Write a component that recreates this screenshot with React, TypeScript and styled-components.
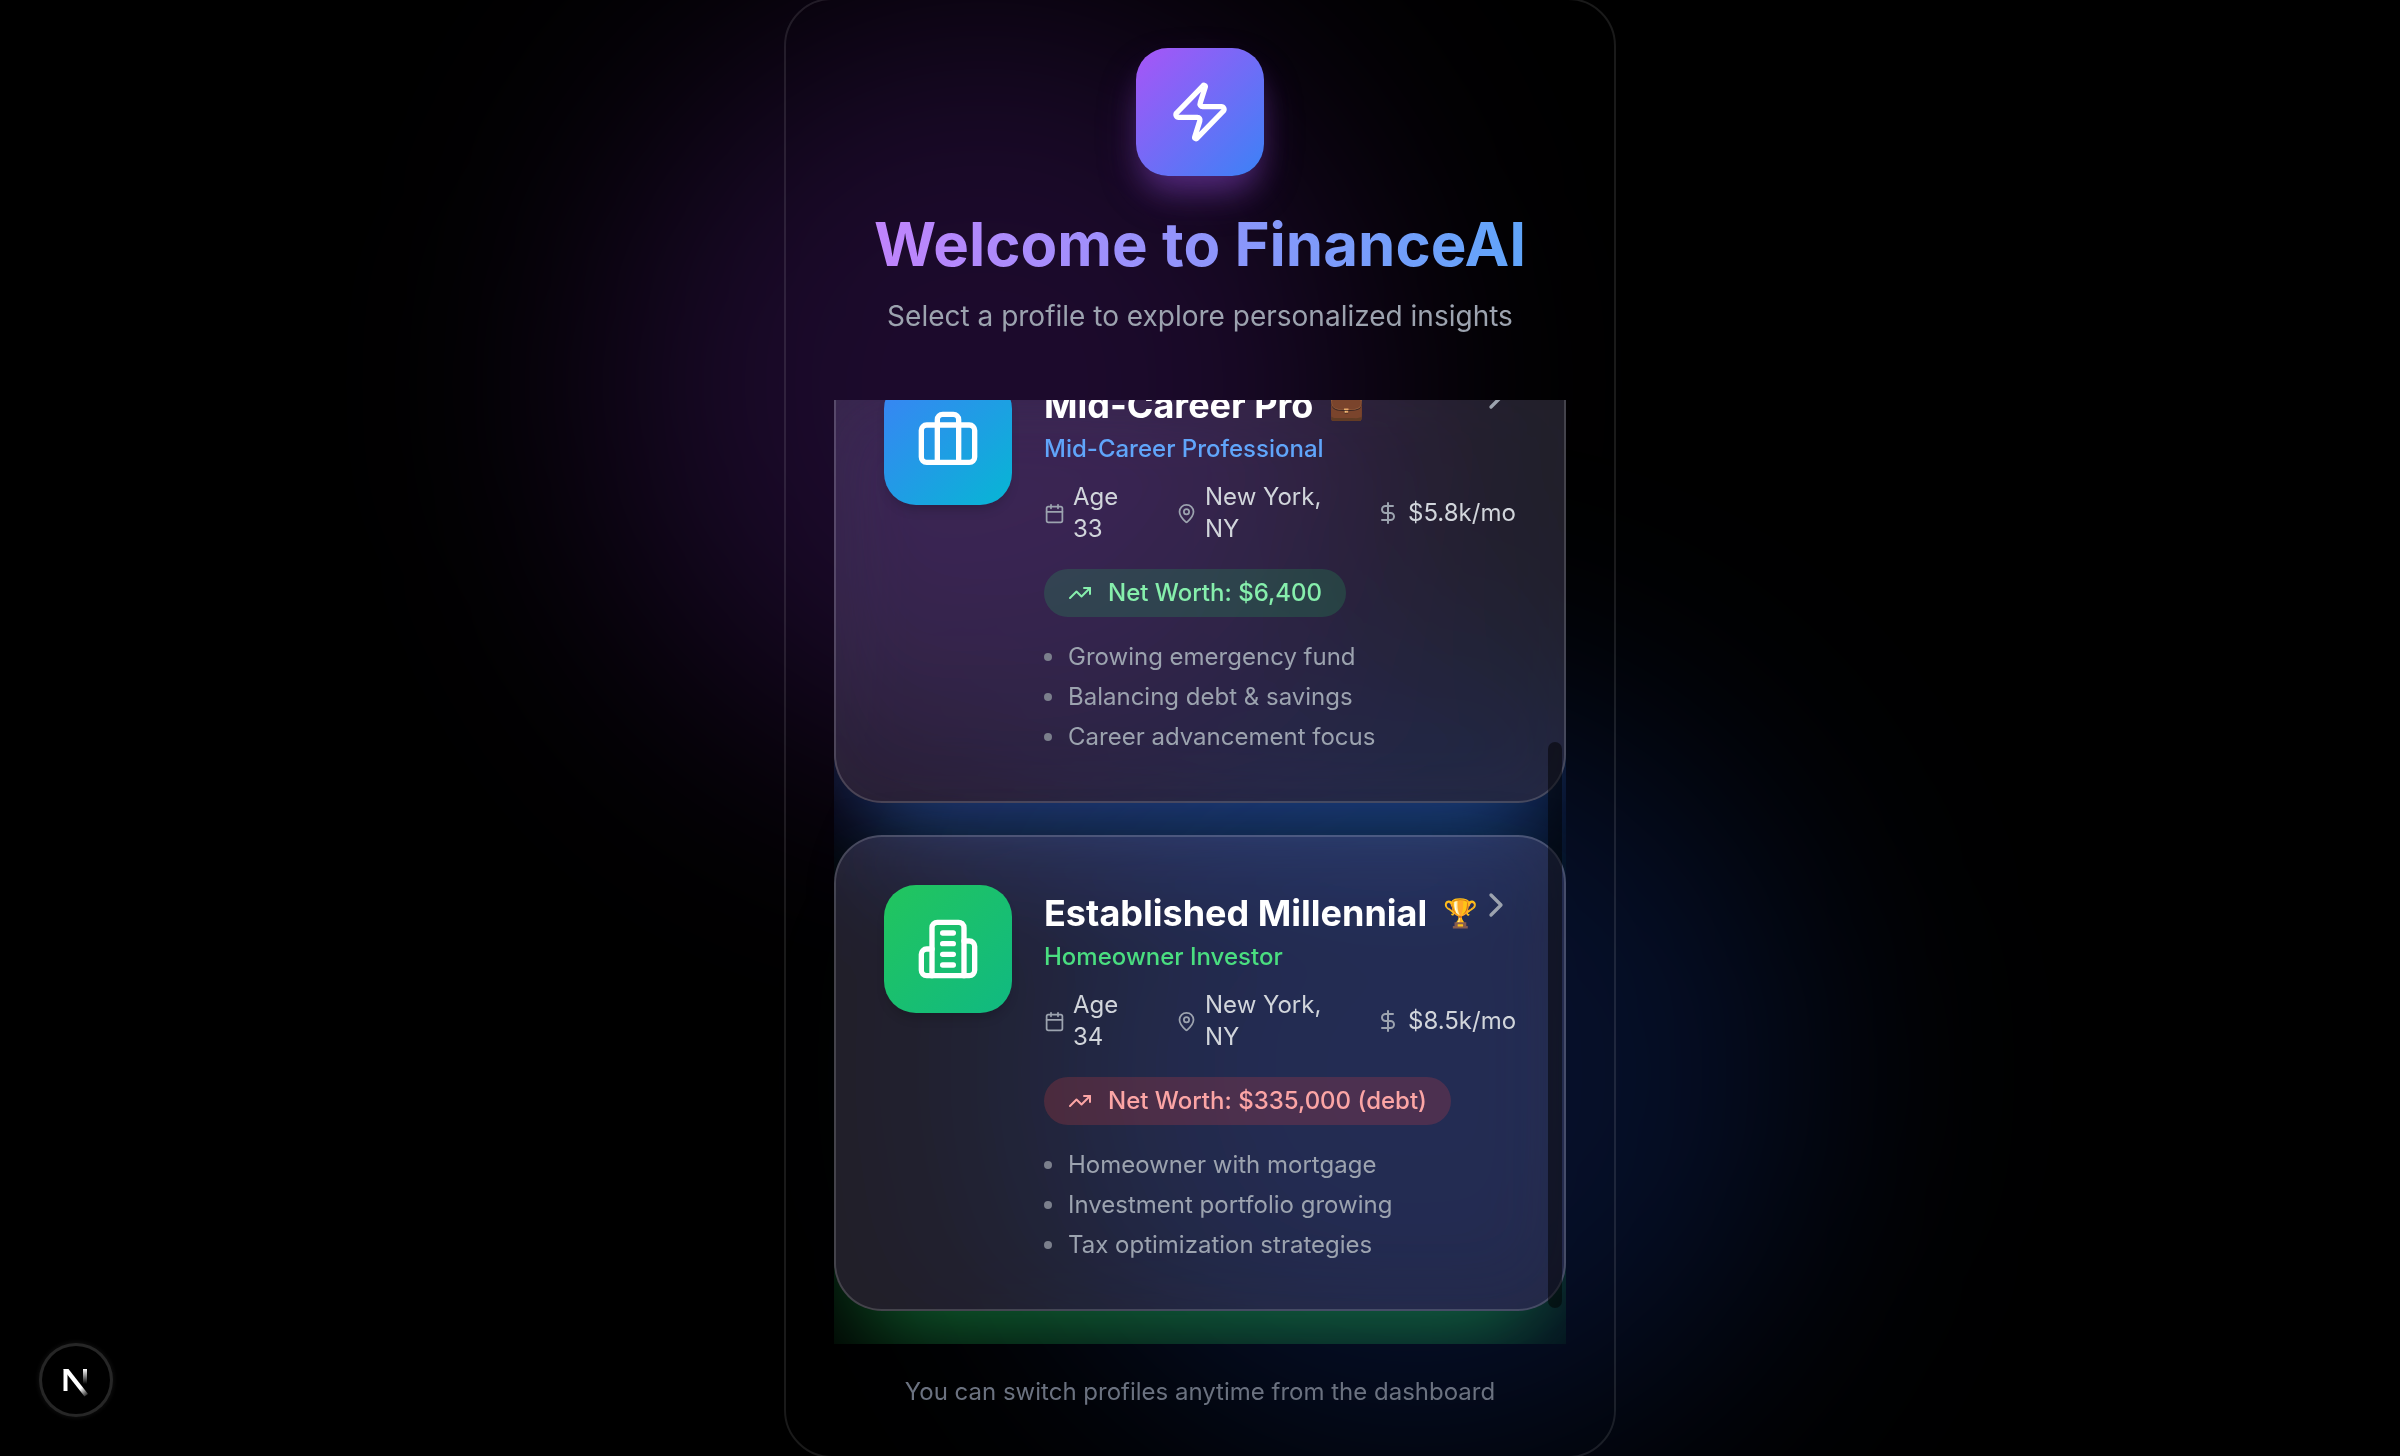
import React from "react";
import styled, { createGlobalStyle } from "styled-components";
import {
  Briefcase,
  Calendar,
  ChevronRight,
  DollarSign,
  MapPin,
  TrendingUp,
  Zap,
} from "lucide-react";

const GlobalStyle = createGlobalStyle`
  *, *::before, *::after { box-sizing: border-box; }
  html, body { margin: 0; background: #000; }
  body {
    font-family: Inter, "Noto Sans", sans-serif;
    color: #fff;
    -webkit-font-smoothing: antialiased;
  }
`;

const Page = styled.main`
  position: relative;
  height: 100vh;
  display: flex;
  align-items: center;
  justify-content: center;
  overflow: hidden;
  background: #000;
`;

const Glow = styled.div<{ $tone: "purple" | "blue" }>`
  position: absolute;
  width: 768px;
  height: 768px;
  border-radius: 50%;
  filter: blur(128px);
  ${({ $tone }) =>
    $tone === "purple"
      ? "top: 0; left: 25%; background: rgba(147, 51, 234, 0.19);"
      : "bottom: 0; right: 25%; background: rgba(29, 78, 216, 0.2);"}
`;

const Panel = styled.section`
  position: relative;
  flex: none;
  display: flex;
  flex-direction: column;
  width: 100%;
  max-width: 832px;
  height: calc(100vh + 4px);
  padding: 48px;
  border: 2px solid rgba(255, 255, 255, 0.1);
  border-radius: 48px;
`;

const Header = styled.header`
  display: flex;
  flex-direction: column;
  align-items: center;
  margin-bottom: 64px;
`;

const Logo = styled.div`
  display: grid;
  place-items: center;
  width: 128px;
  height: 128px;
  margin-bottom: 32px;
  border-radius: 32px;
  background: linear-gradient(to bottom right, #a855f7, #3b82f6);
  box-shadow: 0 20px 30px -6px rgba(168, 85, 247, 0.3), 0 20px 50px -10px rgba(168, 85, 247, 0.25);
`;

const Title = styled.h1`
  margin: 0 0 16px;
  font-size: 60px;
  line-height: 72px;
  font-weight: 700;
  color: transparent;
  background: linear-gradient(to right, #c084fc, #60a5fa);
  background-clip: text;
  -webkit-background-clip: text;
`;

const Subtitle = styled.p`
  margin: 0;
  font-size: 28px;
  line-height: 40px;
  color: #9ca3af;
`;

const ListFrame = styled.div`
  position: relative;
  flex: 1;
  min-height: 0;
  display: flex;
`;

const ProfileList = styled.div`
  flex: 1;
  display: flex;
  flex-direction: column;
  justify-content: flex-end;
  gap: 32px;
  padding-bottom: 33px;
  overflow: hidden;
`;

const ScrollThumb = styled.div`
  position: absolute;
  right: 4px;
  bottom: 36px;
  width: 14px;
  height: 60%;
  border-radius: 7px;
  background: rgba(0, 0, 0, 0.5);
`;

const Card = styled.button<{ $shadow: string }>`
  position: relative;
  flex: none;
  display: flex;
  align-items: flex-start;
  gap: 32px;
  width: 100%;
  padding: 48px;
  border: 2px solid rgba(255, 255, 255, 0.16);
  border-radius: 48px;
  background: rgba(205, 195, 255, 0.16);
  backdrop-filter: blur(40px) saturate(130%);
  box-shadow: 0 50px 100px -24px ${({ $shadow }) => $shadow};
  color: inherit;
  font: inherit;
  text-align: left;
  cursor: pointer;
`;

const Avatar = styled.span<{ $from: string; $to: string }>`
  flex: none;
  display: grid;
  place-items: center;
  width: 128px;
  height: 128px;
  border-radius: 32px;
  background: linear-gradient(to bottom right, ${({ $from }) => $from}, ${({ $to }) => $to});
  box-shadow: 0 8px 12px -4px rgba(0, 0, 0, 0.2);
`;

const Details = styled.span`
  flex: 1;
  min-width: 0;
  display: flex;
  flex-direction: column;
  align-items: flex-start;
  font-size: 24px;
  line-height: 32px;
`;

const NameRow = styled.span`
  display: flex;
  align-items: center;
  gap: 16px;
  line-height: 56px;
  white-space: nowrap;
`;

const Name = styled.span`
  font-size: 36px;
  font-weight: 700;
`;

const Emoji = styled.span`
  font-size: 28px;
`;

const Role = styled.span<{ $color: string }>`
  margin-bottom: 16px;
  font-weight: 500;
  color: ${({ $color }) => $color};
`;

const Facts = styled.span`
  display: grid;
  grid-template-columns: 100px 168px auto;
  column-gap: 32px;
  margin-bottom: 24px;
  color: #d1d5db;
`;

const Fact = styled.span`
  display: flex;
  align-items: center;
  gap: 8px;

  svg {
    flex: none;
    color: #9ca3af;
  }
`;

const Worth = styled.span<{ $debt: boolean }>`
  display: flex;
  align-items: center;
  gap: 16px;
  margin-bottom: 24px;
  padding: 8px 24px;
  border-radius: 24px;
  font-weight: 500;
  color: ${({ $debt }) => ($debt ? "#fca5a5" : "#86efac")};
  background: ${({ $debt }) => ($debt ? "rgba(239, 68, 68, 0.2)" : "rgba(34, 197, 94, 0.2)")};
`;

const Traits = styled.span`
  display: flex;
  flex-direction: column;
  gap: 8px;
  color: #9ca3af;
`;

const Trait = styled.span`
  display: flex;
  align-items: center;
  gap: 16px;

  &::before {
    content: "";
    width: 8px;
    height: 8px;
    border-radius: 50%;
    background: #7b7f8c;
  }
`;

const Chevron = styled(ChevronRight)`
  position: absolute;
  top: 48px;
  right: 48px;
  color: #9ca3af;
`;

const Footnote = styled.p`
  margin: 32px 0 0;
  font-size: 24px;
  line-height: 32px;
  text-align: center;
  color: #6b7280;
`;

const DevBadge = styled.button`
  position: absolute;
  left: 42px;
  bottom: 42px;
  display: grid;
  place-items: center;
  width: 68px;
  height: 68px;
  padding: 0;
  border: 0;
  border-radius: 50%;
  background: #000;
  box-shadow: 0 0 0 3px #262626, 0 0 4px 4px rgba(255, 255, 255, 0.06);
  cursor: pointer;
`;

type IconProps = { size?: number; color?: string };

function OfficeTower({ size = 24, color = "currentColor" }: IconProps) {
  return (
    <svg
      width={size}
      height={size}
      viewBox="0 0 24 24"
      fill="none"
      stroke={color}
      strokeWidth="2"
      strokeLinecap="round"
      strokeLinejoin="round"
      aria-hidden="true"
    >
      <path d="M6 22V4a2 2 0 0 1 2-2h8a2 2 0 0 1 2 2v18Z" />
      <path d="M6 12H4a2 2 0 0 0-2 2v6a2 2 0 0 0 2 2h2" />
      <path d="M18 9h2a2 2 0 0 1 2 2v9a2 2 0 0 1-2 2h-2" />
      <path d="M10 6h4" />
      <path d="M10 10h4" />
      <path d="M10 14h4" />
      <path d="M10 18h4" />
    </svg>
  );
}

const profiles = [
  {
    name: "Mid-Career Pro",
    emoji: "💼",
    role: "Mid-Career Professional",
    roleColor: "#60a5fa",
    icon: Briefcase,
    from: "#3b82f6",
    to: "#06b6d4",
    shadow: "rgba(59, 130, 246, 0.5)",
    age: 33,
    city: "New York, NY",
    income: "$5.8k/mo",
    worth: "$6,400",
    debt: false,
    traits: ["Growing emergency fund", "Balancing debt & savings", "Career advancement focus"],
  },
  {
    name: "Established Millennial",
    emoji: "🏆",
    role: "Homeowner Investor",
    roleColor: "#4ade80",
    icon: OfficeTower,
    from: "#22c55e",
    to: "#10b981",
    shadow: "rgba(34, 197, 94, 0.5)",
    age: 34,
    city: "New York, NY",
    income: "$8.5k/mo",
    worth: "$335,000 (debt)",
    debt: true,
    traits: ["Homeowner with mortgage", "Investment portfolio growing", "Tax optimization strategies"],
  },
];

function ProfileCard({ profile }: { profile: (typeof profiles)[number] }) {
  const Icon = profile.icon;
  return (
    <Card type="button" $shadow={profile.shadow}>
      <Avatar $from={profile.from} $to={profile.to}>
        <Icon size={64} color="#fff" />
      </Avatar>
      <Details>
        <NameRow>
          <Name>{profile.name}</Name>
          <Emoji>{profile.emoji}</Emoji>
        </NameRow>
        <Role $color={profile.roleColor}>{profile.role}</Role>
        <Facts>
          <Fact>
            <Calendar size={21} />
            <span>Age {profile.age}</span>
          </Fact>
          <Fact>
            <MapPin size={21} />
            <span>{profile.city}</span>
          </Fact>
          <Fact>
            <DollarSign size={24} />
            <span>{profile.income}</span>
          </Fact>
        </Facts>
        <Worth $debt={profile.debt}>
          <TrendingUp size={24} />
          <span>Net Worth: {profile.worth}</span>
        </Worth>
        <Traits>
          {profile.traits.map((trait) => (
            <Trait key={trait}>{trait}</Trait>
          ))}
        </Traits>
      </Details>
      <Chevron size={40} />
    </Card>
  );
}

function DevLogo() {
  return (
    <svg width="40" height="40" viewBox="0 0 40 40" fill="none" aria-hidden="true">
      <defs>
        <linearGradient id="diag" x1="10" y1="10" x2="31" y2="36" gradientUnits="userSpaceOnUse">
          <stop stopColor="#fff" />
          <stop offset="0.7" stopColor="#fff" />
          <stop offset="1" stopColor="#fff" stopOpacity="0.1" />
        </linearGradient>
        <linearGradient id="stem" x1="29" y1="9" x2="29" y2="24" gradientUnits="userSpaceOnUse">
          <stop stopColor="#fff" />
          <stop offset="1" stopColor="#fff" stopOpacity="0" />
        </linearGradient>
      </defs>
      <path d="M7.500 9h4v22h-4z" fill="#fff" />
      <path d="M7.500 9h5l19.500 25-3.500 2.500L8.500 11z" fill="url(#diag)" />
      <path d="M27 9h4v15h-4z" fill="url(#stem)" />
    </svg>
  );
}

export default function App() {
  return (
    <>
      <GlobalStyle />
      <Page>
        <Glow $tone="purple" />
        <Glow $tone="blue" />
        <Panel>
          <Header>
            <Logo>
              <Zap size={64} color="#fff" />
            </Logo>
            <Title>Welcome to FinanceAI</Title>
            <Subtitle>Select a profile to explore personalized insights</Subtitle>
          </Header>
          <ListFrame>
            <ProfileList>
              {profiles.map((profile) => (
                <ProfileCard key={profile.name} profile={profile} />
              ))}
            </ProfileList>
            <ScrollThumb />
          </ListFrame>
          <Footnote>You can switch profiles anytime from the dashboard</Footnote>
        </Panel>
        <DevBadge type="button" aria-label="Open developer tools">
          <DevLogo />
        </DevBadge>
      </Page>
    </>
  );
}
